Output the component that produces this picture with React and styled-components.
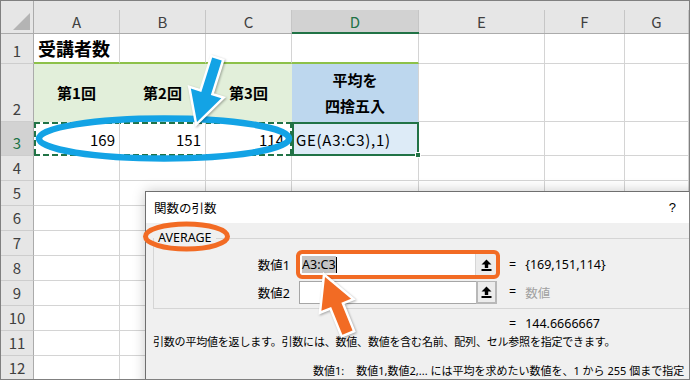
import React from 'react';
import styled, { createGlobalStyle } from 'styled-components';

const GRID = '#d4d4d4';
const SEL = '#217346';
const HEAD_GREEN = '2px solid #8dc149';
const GREEN_FILL = '#e2efda';
const BLUE_FILL = '#bdd7ee';

const Global = createGlobalStyle`
  html, body { margin: 0; padding: 0; background: #fff; }
  body { font-family: "Noto Sans CJK JP", "Noto Sans", sans-serif; }
  *, *::before, *::after { box-sizing: border-box; }
`;

const Frame = styled.div`
  position: relative;
  width: 690px;
  height: 380px;
  border: 1px solid #808080;
  overflow: hidden;
  background: #fff;
`;

const Sheet = styled.div`
  display: grid;
  grid-template-columns: 33px 86px 86px 86px 127px 126px 80px 64px;
  grid-template-rows: 33px 30px 58px 34px repeat(9, 25px);
  font-family: "Noto Sans CJK JP", "Noto Sans", sans-serif;
  color: #000;
`;

const Corner = styled.div`
  background: #e6e6e6;
  border-right: 1px solid #ababab;
  border-bottom: 1px solid #ababab;
  display: flex;
  align-items: flex-end;
  justify-content: flex-end;
  padding: 0 3px 3px 0;
`;

const SelectAll = styled.span`
  width: 0;
  height: 0;
  border-left: 17px solid transparent;
  border-bottom: 17px solid #b4b4b4;
`;

const ColHeader = styled.div`
  background: #e6e6e6;
  border-bottom: ${p => (p.$selected ? `2px solid ${SEL}` : '1px solid #ababab')};
  display: flex;
  padding-top: 9px;
`;

const ColLabel = styled.div`
  flex: 1;
  display: flex;
  align-items: center;
  justify-content: center;
  border-right: 1px solid #c6c6c6;
  background: ${p => (p.$selected ? '#d2d2d2' : 'transparent')};
  color: ${p => (p.$selected ? SEL : '#404040')};
  font-size: 15px;
`;

const RowHeader = styled.div`
  background: ${p => (p.$selected ? '#d2d2d2' : '#e6e6e6')};
  color: ${p => (p.$selected ? SEL : '#404040')};
  border-right: 1px solid #ababab;
  border-bottom: 1px solid #cdcdcd;
  display: flex;
  align-items: flex-end;
  justify-content: center;
  padding-bottom: 2px;
  font-size: 15px;
  line-height: 20px;
`;

const Cell = styled.div`
  display: flex;
  align-items: center;
  justify-content: ${p => p.$justify || 'flex-start'};
  padding: 0 4px;
  min-width: 0;
  background: ${p => p.$bg || '#fff'};
  border-right: 1px solid ${p => p.$right || GRID};
  border-bottom: ${p => p.$bottom || `1px solid ${GRID}`};
  font-size: ${p => p.$size || 15}px;
  font-weight: ${p => (p.$bold ? 700 : 400)};
  white-space: nowrap;
`;

const TwoLine = styled.div`
  text-align: center;
  line-height: 26px;
  padding-top: 1px;
`;

const dashH = `repeating-linear-gradient(90deg, ${SEL} 0 6px, transparent 6px 9px)`;
const dashV = `repeating-linear-gradient(180deg, ${SEL} 0 6px, transparent 6px 9px)`;

const CopyRange = styled.div`
  grid-column: span 3;
  display: grid;
  grid-template-columns: repeat(3, 86px);
  background:
    ${dashH} top left / 100% 2px no-repeat,
    ${dashH} bottom left / 100% 2px no-repeat,
    ${dashV} top left / 2px 100% no-repeat,
    ${dashV} top right / 2px 100% no-repeat,
    #fff;
`;

const RangeCell = styled.div`
  display: flex;
  align-items: center;
  justify-content: flex-end;
  padding-right: ${p => (p.$last ? 8 : 4)}px;
  font-size: 15px;
  border-right: ${p => (p.$last ? 'none' : `1px solid ${GRID}`)};
`;

const ActiveCell = styled.div`
  position: relative;
  display: flex;
  align-items: center;
  padding-left: 2px;
  background: #ddebf7;
  border: 2px solid ${SEL};
  min-width: 0;
`;

const ActiveText = styled.span`
  overflow: hidden;
  white-space: nowrap;
  font-size: 15px;
  letter-spacing: 0.7px;
`;

const FillHandle = styled.span`
  position: absolute;
  right: -4px;
  bottom: -4px;
  width: 6px;
  height: 6px;
  background: ${SEL};
  border: 1px solid #fff;
`;

/* ---------- Dialog ---------- */

const Dialog = styled.div`
  position: absolute;
  left: 144px;
  top: 190px;
  width: 560px;
  height: 200px;
  border: 1px solid #6f6f6f;
  background: #f0f0f0;
  box-shadow: 0 0 12px rgba(0, 0, 0, 0.22);
  font-family: "Noto Sans", "Noto Sans CJK JP", sans-serif;
  color: #000;
  z-index: 2;
`;

const TitleBar = styled.div`
  height: 31px;
  background: #fff;
  display: flex;
  align-items: center;
  justify-content: space-between;
  padding: 0 28px 0 8px;
  font-size: 12.5px;
`;

const Help = styled.span`
  font-size: 13px;
  font-family: "Liberation Sans", sans-serif;
`;

const DialogBody = styled.div`
  padding: 0 0 0 7px;
`;

const Group = styled.fieldset`
  margin: 6px 8px 0 0;
  padding: 6px 0 4px 0;
  min-width: 0;
  border: 1px solid #d5d5d5;
`;

const Legend = styled.legend`
  padding: 0 4px;
  margin: 0;
  line-height: 18px;
  font-size: 12.5px;
`;

const ArgGrid = styled.div`
  display: grid;
  grid-template-columns: 136px 198px 1fr;
  grid-auto-rows: 23px;
  column-gap: 9px;
  row-gap: 5px;
  align-items: center;
  font-size: 12.5px;
`;

const ArgLabel = styled.div`
  text-align: right;
`;

const ArgInput = styled.div`
  height: 23px;
  display: flex;
  background: #fff;
  border: 1px solid #a6a6a6;
  ${p => p.$highlight && `
    outline: 4px solid #f26b24;
    outline-offset: -1px;
    border-radius: 3px;
  `}
`;

const InputText = styled.div`
  flex: 1;
  display: flex;
  align-items: center;
  padding-left: 2px;
`;

const Selected = styled.span`
  background: #c4c4c4;
  line-height: 17px;
`;

const Caret = styled.span`
  width: 1px;
  height: 16px;
  background: #000;
`;

const RefButton = styled.div`
  width: 21px;
  display: flex;
  align-items: center;
  justify-content: center;
  background: #ececec;
  border-left: 1px solid #d6d6d6;
  ${p => p.$framed && `
    border: 2px solid #b8b8b8;
    border-top-width: 1px;
    margin: -1px -1px -1px 0;
  `}
`;

const ArgResult = styled.div`
  display: flex;
  gap: 9px;
  padding-left: 3px;
`;

const Muted = styled.span`
  color: #a0a0a0;
`;

const FormulaResult = styled.div`
  margin: 6px 0 0 356px;
  line-height: 18px;
  font-size: 12.5px;
  display: flex;
  gap: 9px;
`;

const Description = styled.div`
  line-height: 18px;
  font-size: 11px;
  letter-spacing: -0.2px;
  white-space: nowrap;
`;

const ArgHelp = styled.div`
  margin: 11px 0 0 160px;
  line-height: 18px;
  font-size: 11px;
  white-space: nowrap;
  display: flex;
  gap: 12px;
`;

const Annotations = styled.svg`
  position: absolute;
  left: -1px;
  top: -1px;
  width: 690px;
  height: 380px;
  pointer-events: none;
  z-index: 3;
`;

const UpIcon = () => (
  <svg width="11" height="12" viewBox="0 0 11 12">
    <path d="M5.5 0.5 L10.5 5.5 H7.2 V9 H3.8 V5.5 H0.5 Z" fill="#000" />
    <rect x="0.5" y="10" width="10" height="2" fill="#000" />
  </svg>
);

const cols = ['A', 'B', 'C', 'D', 'E', 'F', 'G'];

const PlainCells = ({ n, prefix }) =>
  Array.from({ length: n }, (_, i) => <Cell key={`${prefix}-${i}`} />);

export default function App() {
  return (
    <>
      <Global />
      <Frame>
        <Sheet>
          <Corner><SelectAll /></Corner>
          {cols.map(c => (
            <ColHeader key={c} $selected={c === 'D'}>
              <ColLabel $selected={c === 'D'}>{c}</ColLabel>
            </ColHeader>
          ))}

          <RowHeader>1</RowHeader>
          <Cell $bottom={HEAD_GREEN} $size={18} $bold>受講者数</Cell>
          <Cell $bottom={HEAD_GREEN} />
          <Cell $bottom={HEAD_GREEN} />
          <Cell $bottom={HEAD_GREEN} />
          <PlainCells n={3} prefix="r1" />

          <RowHeader>2</RowHeader>
          {['第1回', '第2回', '第3回'].map(t => (
            <Cell key={t} $bg={GREEN_FILL} $right={GREEN_FILL} $bottom={`1px solid ${GREEN_FILL}`} $justify="center" $bold>
              {t}
            </Cell>
          ))}
          <Cell $bg={BLUE_FILL} $bottom={`1px solid ${BLUE_FILL}`} $justify="center" $bold>
            <TwoLine>平均を<br />四捨五入</TwoLine>
          </Cell>
          <PlainCells n={3} prefix="r2" />

          <RowHeader $selected>3</RowHeader>
          <CopyRange>
            <RangeCell>169</RangeCell>
            <RangeCell>151</RangeCell>
            <RangeCell $last>114</RangeCell>
          </CopyRange>
          <ActiveCell>
            <ActiveText>GE(A3:C3),1)</ActiveText>
            <FillHandle />
          </ActiveCell>
          <PlainCells n={3} prefix="r3" />

          {[4, 5, 6, 7, 8, 9, 10, 11, 12].map(r => (
            <React.Fragment key={r}>
              <RowHeader>{r}</RowHeader>
              <PlainCells n={7} prefix={`r${r}`} />
            </React.Fragment>
          ))}
        </Sheet>

        <Dialog>
          <TitleBar>
            <span>関数の引数</span>
            <Help>?</Help>
          </TitleBar>
          <DialogBody>
            <Group>
              <Legend>AVERAGE</Legend>
              <ArgGrid>
                <ArgLabel>数値1</ArgLabel>
                <ArgInput $highlight>
                  <InputText><Selected>A3:C3</Selected><Caret /></InputText>
                  <RefButton><UpIcon /></RefButton>
                </ArgInput>
                <ArgResult><span>=</span><span>{'{169,151,114}'}</span></ArgResult>

                <ArgLabel>数値2</ArgLabel>
                <ArgInput>
                  <InputText />
                  <RefButton $framed><UpIcon /></RefButton>
                </ArgInput>
                <ArgResult><span>=</span><Muted>数値</Muted></ArgResult>
              </ArgGrid>
            </Group>
            <FormulaResult><span>=</span><span>144.6666667</span></FormulaResult>
            <Description>
              引数の平均値を返します。引数には、数値、数値を含む名前、配列、セル参照を指定できます。
            </Description>
            <ArgHelp>
              <span>数値1:</span>
              <span>数値1,数値2,... には平均を求めたい数値を、1 から 255 個まで指定</span>
            </ArgHelp>
          </DialogBody>
        </Dialog>

        <Annotations viewBox="0 0 690 380">
          <ellipse cx="164" cy="138.5" rx="125" ry="20" fill="none" stroke="#13a3e5" strokeWidth="6.5" />
          <g style={{ filter: 'drop-shadow(1px 1px 1px rgba(0,0,0,0.3))' }}>
            <polygon
              transform="translate(197 122) rotate(17.6)"
              points="0,0 16,-30 5,-30 5,-66 -5,-66 -5,-30 -16,-30"
              fill="#13a3e5"
              stroke="#fff"
              strokeWidth="5"
              strokeLinejoin="miter"
              paintOrder="stroke"
            />
          </g>
          <ellipse cx="186.5" cy="236.5" rx="41" ry="12.5" fill="none" stroke="#f26b24" strokeWidth="5" />
          <g style={{ filter: 'drop-shadow(1px 1px 1px rgba(0,0,0,0.3))' }}>
            <polygon
              transform="translate(325 277) rotate(-22)"
              points="0,0 16,30 5.5,30 5.5,60 -5.5,60 -5.5,30 -16,30"
              fill="#f26b24"
              stroke="#fff"
              strokeWidth="5"
              strokeLinejoin="miter"
              paintOrder="stroke"
            />
          </g>
        </Annotations>
      </Frame>
    </>
  );
}
